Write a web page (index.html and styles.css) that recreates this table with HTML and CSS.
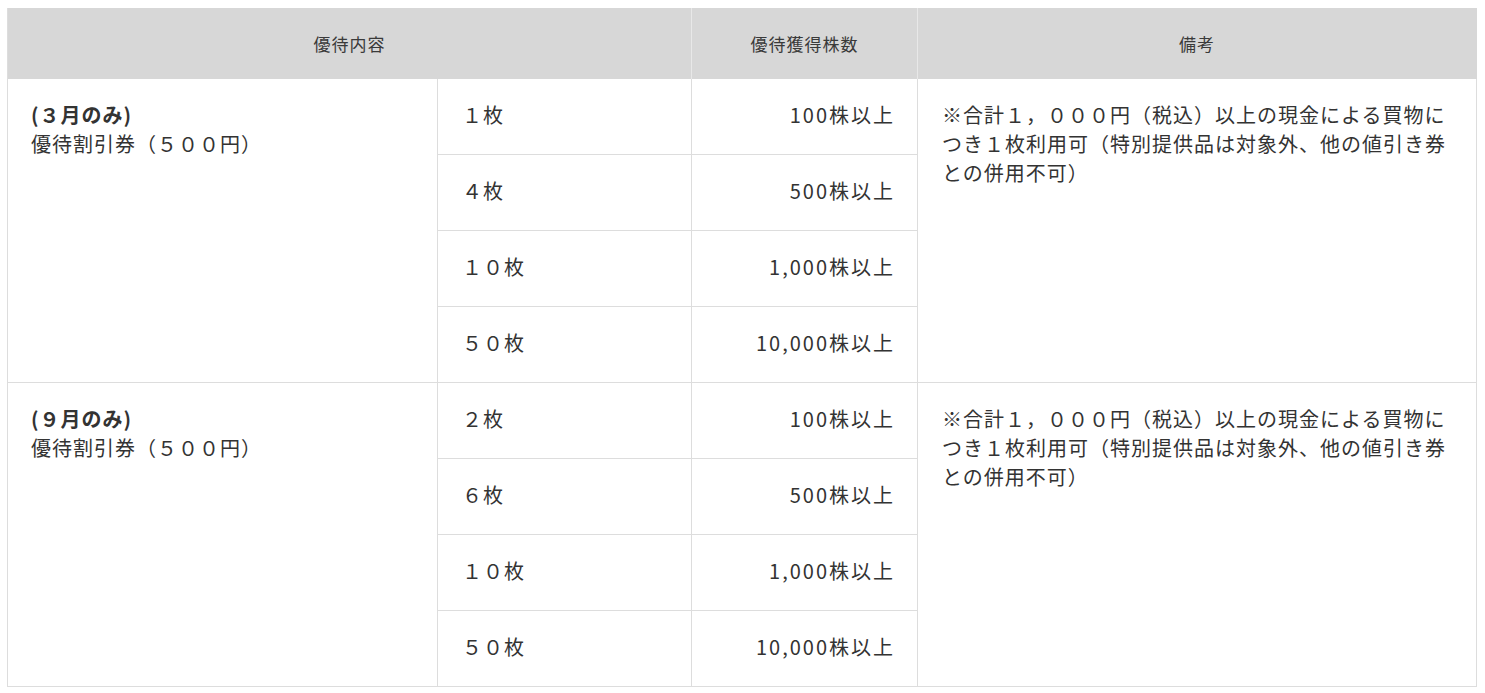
FILE: index.html
```html
<!DOCTYPE html>
<html lang="ja">
<head>
<meta charset="utf-8">
<title>優待内容</title>
<link rel="stylesheet" href="styles.css">
</head>
<body>
<div class="wrap">
<table class="yutai">
  <colgroup>
    <col class="c1"><col class="c2"><col class="c3"><col class="c4">
  </colgroup>
  <thead>
    <tr>
      <th colspan="2">優待内容</th>
      <th>優待獲得株数</th>
      <th class="last">備考</th>
    </tr>
  </thead>
  <tbody>
    <tr>
      <td rowspan="4" class="item"><strong>(３月のみ)</strong><br>優待割引券（５００円）</td>
      <td>１枚</td>
      <td class="num">100株以上</td>
      <td rowspan="4" class="note">※合計１，０００円（税込）以上の現金による買物につき１枚利用可（特別提供品は対象外、他の値引き券との併用不可）</td>
    </tr>
    <tr><td>４枚</td><td class="num">500株以上</td></tr>
    <tr><td>１０枚</td><td class="num">1,000株以上</td></tr>
    <tr><td>５０枚</td><td class="num">10,000株以上</td></tr>
    <tr>
      <td rowspan="4" class="item"><strong>(９月のみ)</strong><br>優待割引券（５００円）</td>
      <td>２枚</td>
      <td class="num">100株以上</td>
      <td rowspan="4" class="note">※合計１，０００円（税込）以上の現金による買物につき１枚利用可（特別提供品は対象外、他の値引き券との併用不可）</td>
    </tr>
    <tr><td>６枚</td><td class="num">500株以上</td></tr>
    <tr><td>１０枚</td><td class="num">1,000株以上</td></tr>
    <tr><td>５０枚</td><td class="num">10,000株以上</td></tr>
  </tbody>
</table>
</div>
</body>
</html>
```
FILE: styles.css
```css
html, body {
  margin: 0;
  padding: 0;
  background: #fff;
}
body {
  font-family: "Noto Sans CJK JP", "Noto Sans", sans-serif;
  color: #333;
}
.wrap {
  padding: 8px 8px 0 7px;
}
.yutai {
  width: 1470px;
  table-layout: fixed;
  border-collapse: separate;
  border-spacing: 0;
  border-left: 1px solid #dddddd;
}
.c1 { width: 430px; }
.c2 { width: 254px; }
.c3 { width: 226px; }
.c4 { width: 559px; }
.yutai th {
  background: #d7d7d7;
  font-weight: normal;
  font-size: 17px;
  letter-spacing: 1px;
  line-height: 29px;
  color: #3a3a3a;
  padding: 21px 24px;
  text-align: center;
  border-right: 1px solid #e8e8e8;
}
.yutai th.last {
  border-right: 1px solid #d7d7d7;
}
.yutai td {
  font-size: 20px;
  letter-spacing: 1px;
  line-height: 29px;
  padding: 21px 24px 25px;
  vertical-align: top;
  text-align: left;
  border-right: 1px solid #dddddd;
  border-bottom: 1px solid #dddddd;
}
.yutai td.item {
  padding-left: 23px;
}
.yutai td.num {
  text-align: right;
  letter-spacing: 2px;
  padding-right: 22px;
}
.yutai td.item strong {
  font-weight: bold;
}
```
